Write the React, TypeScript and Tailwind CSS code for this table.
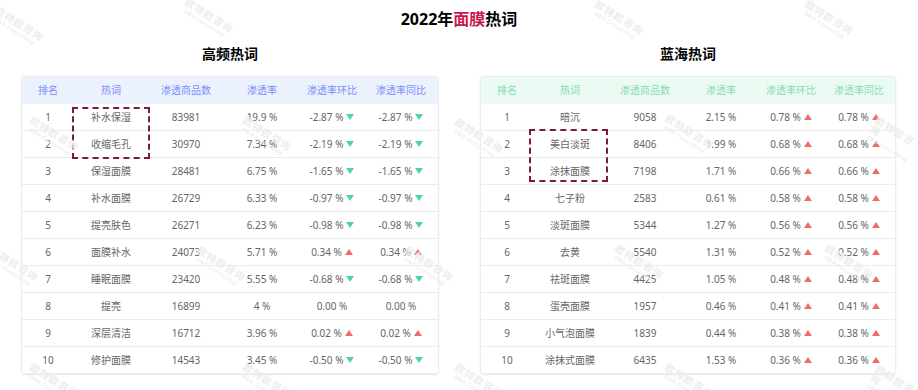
import React from 'react';

type Row = [string, string, string, string, string];

const hotRows: Row[] = [
  ['1', '补水保湿', '83981', '19.9 %', '-2.87 %'],
  ['2', '收缩毛孔', '30970', '7.34 %', '-2.19 %'],
  ['3', '保湿面膜', '28481', '6.75 %', '-1.65 %'],
  ['4', '补水面膜', '26729', '6.33 %', '-0.97 %'],
  ['5', '提亮肤色', '26271', '6.23 %', '-0.98 %'],
  ['6', '面膜补水', '24073', '5.71 %', '0.34 %'],
  ['7', '睡眠面膜', '23420', '5.55 %', '-0.68 %'],
  ['8', '提亮', '16899', '4 %', '0.00 %'],
  ['9', '深层清洁', '16712', '3.96 %', '0.02 %'],
  ['10', '修护面膜', '14543', '3.45 %', '-0.50 %'],
];

const blueRows: Row[] = [
  ['1', '暗沉', '9058', '2.15 %', '0.78 %'],
  ['2', '美白淡斑', '8406', '1.99 %', '0.68 %'],
  ['3', '涂抹面膜', '7198', '1.71 %', '0.66 %'],
  ['4', '七子粉', '2583', '0.61 %', '0.58 %'],
  ['5', '淡斑面膜', '5344', '1.27 %', '0.56 %'],
  ['6', '去黄', '5540', '1.31 %', '0.52 %'],
  ['7', '祛斑面膜', '4425', '1.05 %', '0.48 %'],
  ['8', '蛋壳面膜', '1957', '0.46 %', '0.41 %'],
  ['9', '小气泡面膜', '1839', '0.44 %', '0.38 %'],
  ['10', '涂抹式面膜', '6435', '1.53 %', '0.36 %'],
];

const headers = ['排名', '热词', '渗透商品数', '渗透率', '渗透率环比', '渗透率同比'];

function Arrow({ value }: { value: string }) {
  if (value.startsWith('0.00')) return null;
  if (value.startsWith('-')) {
    return (
      <svg width="8" height="6" viewBox="0 0 8 6" className="ml-[3px]">
        <path d="M0 0 H8 L4 6 Z" fill="#4fd6a0" />
      </svg>
    );
  }
  return (
    <svg width="8" height="6" viewBox="0 0 8 6" className="ml-[3px]">
      <path d="M4 0 L8 6 H0 Z" fill="#f26b6b" />
    </svg>
  );
}

function Trend({ value }: { value: string }) {
  return (
    <div className="flex items-center justify-center">
      <span>{value}</span>
      <Arrow value={value} />
    </div>
  );
}

function HotTable({
  title,
  rows,
  theme,
  box,
}: {
  title: string;
  rows: Row[];
  theme: 'blue' | 'green';
  box: string;
}) {
  const cols =
    theme === 'blue'
      ? 'grid grid-cols-[52px_74px_76px_76px_64px_74px]'
      : 'grid grid-cols-[52px_74px_76px_76px_64px_72px]';
  return (
    <div className="flex flex-col items-center">
      <h2 className="text-[14px] font-bold text-black leading-none mt-[20px] mb-[15px]">{title}</h2>
      <div className="relative rounded-[4px] border border-[#ececec] bg-white shadow-[0_0_3px_rgba(0,0,0,0.05)]">
        <div
          className={`${cols} h-[27px] items-center text-center text-[10px] rounded-t-[4px] ${
            theme === 'blue' ? 'bg-[#ecf1fe] text-[#7a8ff7]' : 'bg-[#ebfaf3] text-[#86ddb0]'
          }`}
        >
          {headers.map((h) => (
            <div key={h}>{h}</div>
          ))}
        </div>
        {rows.map((r) => (
          <div
            key={r[0]}
            className={`${cols} h-[27px] items-center text-center text-[10px] text-[#666] border-b border-[#ececec] last:border-b-0`}
          >
            <div>{r[0]}</div>
            <div>{r[1]}</div>
            <div>{r[2]}</div>
            <div>{r[3]}</div>
            <Trend value={r[4]} />
            <Trend value={r[4]} />
          </div>
        ))}
        <div className={`absolute border-2 border-dashed border-[#7a1c3d] ${box}`} />
      </div>
    </div>
  );
}

function Watermark({ className }: { className: string }) {
  return (
    <div
      className={`absolute pointer-events-none rotate-[32deg] flex flex-col items-center text-[#ededed] leading-none ${className}`}
    >
      <span className="text-[10px] font-bold tracking-[1px]">欧特欧咨询</span>
      <span className="text-[5px] mt-[2px] font-bold tracking-[0.5px]">O&amp;O Consulting</span>
    </div>
  );
}

const marks = [
  'left-[-10px] top-[18px]',
  'left-[180px] top-[10px]',
  'left-[590px] top-[12px]',
  'left-[800px] top-[12px]',
  'left-[25px] top-[128px]',
  'left-[238px] top-[128px]',
  'left-[450px] top-[130px]',
  'left-[660px] top-[126px]',
  'left-[868px] top-[126px]',
  'left-[-15px] top-[258px]',
  'left-[192px] top-[258px]',
  'left-[400px] top-[258px]',
  'left-[610px] top-[256px]',
  'left-[820px] top-[256px]',
  'left-[25px] top-[375px]',
  'left-[238px] top-[375px]',
  'left-[450px] top-[375px]',
  'left-[660px] top-[375px]',
  'left-[868px] top-[375px]',
];

export default function App() {
  return (
    <div
      className="relative w-[918px] h-[390px] overflow-hidden bg-white"
      style={{ fontFamily: '"Noto Sans", "Noto Sans CJK SC", sans-serif' }}
    >
      <h1 className="text-center text-[16px] font-bold text-black leading-none pt-[11px]">
        2022年<span className="text-[#c8174a]">面膜</span>热词
      </h1>
      <div className="flex pl-[21px] gap-[41px]">
        <HotTable
          title="高频热词"
          rows={hotRows}
          theme="blue"
          box="left-[50px] top-[30px] w-[78px] h-[52px]"
        />
        <HotTable
          title="蓝海热词"
          rows={blueRows}
          theme="green"
          box="left-[48px] top-[52px] w-[79px] h-[53px]"
        />
      </div>
      {marks.map((m) => (
        <Watermark key={m} className={m} />
      ))}
    </div>
  );
}
